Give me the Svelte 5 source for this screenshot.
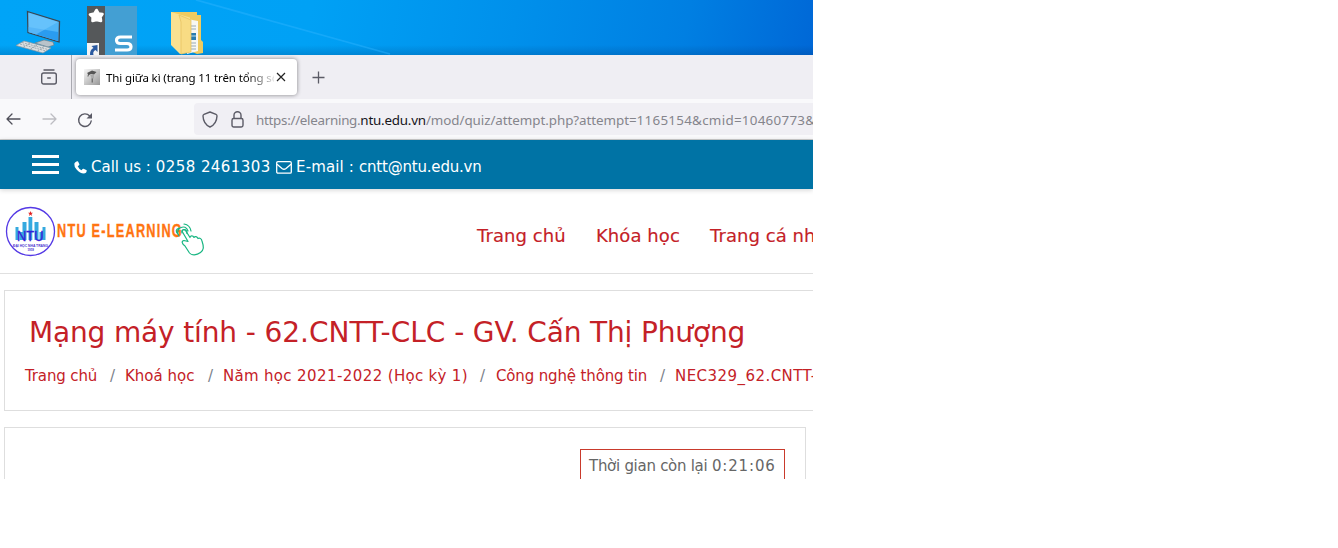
<script>
  const nav = ['Trang chủ', 'Khóa học', 'Trang cá nhân'];
  const crumbs = [
    { text: 'Trang chủ', gap: 28 },
    { text: 'Khoá học', gap: 28 },
    { text: 'Năm học ', digits: '2021-2022', tail: ' (Học kỳ 1)', gap: 29 },
    { text: 'Công nghệ thông tin', gap: 28 },
    { text: '', digits: 'NEC329_62.CNTT-CLC' },
  ];
</script>

<div class="screen">
  <div class="desktop">
    <svg class="beam" width="813" height="55" viewBox="0 0 813 55">
      <path d="M196 0 390 54" stroke="#2fb4ff" stroke-width="1.800" opacity=".45" />
    </svg>
    <svg class="pc" width="46" height="44" viewBox="0 0 46 44">
      <path d="M11.5 1.5 43.5 11.5 43 32 12 22.500Z" fill="#4fb6f8" stroke="#3a4651" stroke-width="1.300" />
      <path d="M12.500 17 42 22V31L12.500 22Z" fill="#2a9cf0" />
      <path d="M42 12 20 24.500 12.500 22V3Z" fill="#7accff" opacity=".55" />
      <path d="M28 30 37 32 38 35 32 37 19 33Z" fill="#b9c3ca" stroke="#707a82" stroke-width=".6" />
      <path d="M8 31 35 38 27 43 0 35.500Z" fill="#dce0e2" stroke="#8b959c" stroke-width=".7" />
      <path d="M6 32.500 32 39.500M4 34 30 41M14 33 7 37.500M21 35 14 39.500M28 36.500 21 41.500" stroke="#8f9aa2" stroke-width=".8" stroke-dasharray="2 1" fill="none" />
    </svg>
    <svg class="app" width="50" height="49" viewBox="0 0 50 49">
      <rect width="50" height="49" fill="#439fd3" />
      <rect width="18" height="49" fill="#55585a" />
      <path d="m9.500 4 2 3.500 4 .5-2 3 .5 4-4.500-1-4 1 .2-4L3 8.500l4.500-1Z" fill="#fff" stroke="#fff" stroke-width="2.600" stroke-linejoin="round" />
      <path d="M45 31H33.500q-4 0-4 3.300t4 3.200h6.500q4 0 4 3.300T40 44H28" fill="none" stroke="#fff" stroke-width="3.200" />
      <rect y="37" width="12" height="12" fill="#f4f4f4" />
      <path d="M3 49c0-4 1-6 3.500-7L4.500 40l6-1v7L8.500 44C6 45 6 47 6.500 49Z" fill="#2959a0" />
    </svg>
    <svg class="folder" width="34" height="44" viewBox="0 0 34 44">
      <path d="M1 1H27L27 4H31V29L33 31V42L27 43 1 32Z" fill="#efcb60" />
      <path d="m17 8 11 2v30L17 43Z" fill="#f7f7f2" />
      <path d="M21 15h5M21 18h5M21 32h5M21 35h5M21 38h5" stroke="#98a9b5" />
      <path d="M21 22h5v7h-5Z" fill="#287cb0" /><path d="M21 25h5" stroke="#b9dce8" />
      <path d="M1 1 20 6.500V41L10 43 1 34Z" fill="#fae191" />
      <path d="M9 4 21 9V41l-10 2V11Z" fill="#f8dc84" stroke="#e4c05c" stroke-width=".7" />
    </svg>
  </div>

  <div class="tabs">
    <div class="archive">
      <svg width="18" height="18" viewBox="0 0 18 18" fill="none" stroke="#5b5b66" stroke-width="1.400" stroke-linecap="round">
        <path d="M4 2h10M7.700 10h2.600" /><rect x="1.700" y="5" width="14.600" height="11" rx="2" />
      </svg>
    </div>
    <div class="tab">
      <svg class="favicon" width="16" height="16" viewBox="0 0 16 16">
        <defs><linearGradient id="fav" x2="1" y2="1"><stop stop-color="#f7f7f7" /><stop offset="1" stop-color="#979797" /></linearGradient></defs>
        <rect width="16" height="16" fill="url(#fav)" />
        <path d="m3 4 5-2.500 4.500 1.500L10 5.500 7 5 5 6Z" fill="#555" /><path d="M6 5.500 10 6v3l-2 2-1-3Z" fill="#aaa" />
        <path d="M4.500 5 4 7.500M8.200 9.500v4" stroke="#555" />
      </svg>
      <span class="title">Thi giữa kì (trang 11 trên tổng số</span>
      <svg class="close" width="10" height="10" viewBox="0 0 10 10" stroke="#222" stroke-width="1.200"><path d="m1 1 8 8M9 1 1 9" /></svg>
    </div>
    <svg class="plus" width="13" height="13" viewBox="0 0 13 13" stroke="#5b5b66" stroke-width="1.300"><path d="M6.500.5v12M.5 6.500h12" /></svg>
  </div>

  <div class="toolbar">
    <svg class="back" width="15" height="14" viewBox="0 0 15 14" fill="none" stroke="#4f4f59" stroke-width="1.300" stroke-linecap="round" stroke-linejoin="round"><path d="M14 7H1M6 2 1 7l5 5" /></svg>
    <svg class="fwd" width="15" height="14" viewBox="0 0 15 14" fill="none" stroke="#bdbdc2" stroke-width="1.300" stroke-linecap="round" stroke-linejoin="round"><path d="M1 7h13M9 2l5 5-5 5" /></svg>
    <svg class="reload" width="16" height="16" viewBox="0 0 16 16"><path d="M14.200 9a6.300 6.300 0 1 1-1.500-5" fill="none" stroke="#5b5b66" stroke-width="1.400" stroke-linecap="round" /><path d="M15 1v5.500H9.500Z" fill="#5b5b66" /></svg>
    <div class="urlbar">
      <svg class="shield" width="16" height="17" viewBox="0 0 16 17" fill="none" stroke="#5b5b66" stroke-width="1.400" stroke-linejoin="round"><path d="M8 1 14 3.300Q15 3.700 15 5c-.2 5-2.500 9-7 11C3.500 14 1.200 10 1 5q0-1.300 1-1.700Z" /></svg>
      <svg class="lock" width="13" height="17" viewBox="0 0 13 17" fill="none" stroke="#5b5b66" stroke-width="1.400"><rect x="1" y="7.500" width="11" height="8.500" rx="1.700" /><path d="M3 7.500V4.300a3.500 3.500 0 0 1 7 0V7.500" /></svg>
      <span class="url">https://elearning.<b>ntu.edu.vn</b><span class="path">/mod/quiz/attempt.php?attempt=</span><span class="query">1165154&amp;cmid=10460773&amp;</span></span>
    </div>
  </div>

  <div class="contact">
    <div class="burger"><i></i><i></i><i></i></div>
    <svg class="phone" width="13" height="13" viewBox="0 0 13 13" fill="#fff"><path d="M2.500.4 3.400.2Q4 0 4.200.7L5.400 3.300Q5.500 3.800 5 4.200L3.700 5.200Q4.800 7.700 7.500 9.200L8.600 7.900Q9 7.500 9.500 7.700L12.300 9Q12.800 9.300 12.700 9.800 12.500 12.400 9.800 12.500 6 12.300 2.600 8.500 0 5.500.3 2.700.7 1 2.500.4Z" /></svg>
    <span class="call">Call us : <span class="num">0258 2461303</span></span>
    <svg class="mail" width="16" height="13" viewBox="0 0 16 13" fill="none" stroke="#fff" stroke-width="1.300"><rect x=".7" y=".7" width="14.600" height="11.400" rx="1.200" /><path d="M1 3.200 6 7.500Q8 9 10 7.500l5-4.300" /></svg>
    <span class="email">E-mail : <span class="addr">cntt@ntu.edu.vn</span></span>
  </div>

  <div class="header">
    <svg class="logo" width="202" height="54" viewBox="0 0 202 54">
      <circle cx="26.500" cy="26.500" r="24" fill="#fff" stroke="#5439e5" stroke-width="1.300" />
      <path d="m26.500 6 .7 1.700h1.800L27.500 9l.6 1.900-1.600-1.100-1.600 1.100.6-1.900L24 7.700h1.800Z" fill="#e12222" />
      <path d="M11.500 22h3v13h-3ZM15.500 27h3v8h-3ZM18.500 17h4v18h-4ZM24.500 12h3.800v23h-3.800ZM30.500 17h4v18h-4ZM38.500 22h3v13h-3ZM35.500 27h3v8h-3Z" fill="#35a9df" />
      <text x="13" y="36" class="ntu" textLength="26.500" lengthAdjust="spacingAndGlyphs">NTU</text>
      <text x="9" y="41.500" class="uni" textLength="35" lengthAdjust="spacingAndGlyphs">ĐẠI HỌC NHA TRANG</text>
      <text x="23.500" y="45.500" class="year" textLength="6.500" lengthAdjust="spacingAndGlyphs">1959</text>
      <text x="53" y="31.500" class="brand" textLength="126" lengthAdjust="spacingAndGlyphs">NTU E-LEARNING</text>
      <g fill="none" stroke="#18b682" stroke-width="1.200" stroke-linejoin="round" stroke-linecap="round">
        <path d="M181 41c-3-2-4-5-1-5.500l4 1-5.500-9.500c-.8-2 1.800-3.500 3-1.500l4.500 7c0-2 3-2.500 4 0 1-1.500 3-1 4 1 2-1 3.500.5 4 2.500 2 6 2 9-1.500 11.500-4 3-9 3-11 .5Z" fill="#fff" />
        <path d="M175 31q-3-5 1-8 6-3 8 3M178 28q-1-3 2-3.500 3 0 3 4M174 29q-4-4 1-6M180 19q6 1 7 7" />
      </g>
    </svg>
    <nav>{#each nav as item, i}<a href="#top" class="n{i}">{item}</a>{/each}</nav>
  </div>

  <div class="card course">
    <h1>Mạng máy tính - <span class="code">62.CNTT-CLC</span> - GV. Cấn Thị Phượng</h1>
    <div class="crumbs">
      {#each crumbs as crumb, i}
        <a href="#top" class="c{i}">{crumb.text}{#if crumb.digits}<span class="wide">{crumb.digits}</span>{/if}{crumb.tail ?? ''}</a>{#if crumb.gap}<span class="sep" style:width="{crumb.gap}px">/</span>{/if}
      {/each}
    </div>
  </div>

  <div class="card quiz"><div class="timer">Thời gian còn lại <span class="clock">0:21:06</span></div></div>
</div>

<style>
  :global(body) { margin: 0; background: #fff; }
  .screen { width: 813px; height: 479px; overflow: hidden; background: #fff; font-family: "DejaVu Sans", sans-serif; display: flex; flex-direction: column; }
  .screen > div { box-sizing: border-box; flex: none; }
  svg { flex: none; display: block; }
  a { color: #c42127; text-decoration: none; }
  .desktop { position: relative; height: 55px; overflow: hidden; display: flex; align-items: flex-start; background: linear-gradient(to bottom, transparent 45px, rgba(0,40,90,.2)), linear-gradient(100deg, #00a4f7 0, #00a1f5 38%, #0090eb 63%, #007fe2 84%, #0068d7 100%); }
  .beam { position: absolute; inset: 0; }
  .pc { margin: 10px 0 0 16px; }
  .app { margin: 6px 0 0 25px; }
  .folder { margin: 11px 0 0 33px; }
  .tabs { height: 44px; background: #efeef3; display: flex; align-items: center; }
  .archive { width: 72px; height: 44px; box-sizing: border-box; border-right: 1px solid #aaaab1; padding: 13px 0 0 40px; }
  .tab { width: 221px; height: 36px; box-sizing: border-box; margin-left: 4px; background: #fff; border-radius: 4px; box-shadow: 0 0 4px rgba(0,0,0,.45); display: flex; align-items: center; padding-left: 8px; }
  .title { font: 11.500px/20px "Noto Sans", sans-serif; letter-spacing: -.12px; width: 168px; margin: 2px 0 0 6px; overflow: hidden; white-space: nowrap; color: #000; mask-image: linear-gradient(to right, #000 140px, transparent 172px); }
  .close { margin-left: 2px; }
  .plus { margin-left: 15px; }
  .toolbar { height: 41px; background: #f9f9fb; border-bottom: 1px solid #ccc; display: flex; align-items: center; }
  .back { margin-left: 6px; }
  .fwd { margin-left: 21px; }
  .reload { margin: 2px 0 0 20px; }
  .urlbar { margin-left: 101px; height: 32px; width: 640px; flex: none; background: #f0eff4; border-radius: 4px; display: flex; align-items: center; }
  .shield { margin-left: 8px; }
  .lock { margin-left: 13px; }
  .url { margin-left: 12px; font: 13.400px/20px "Noto Sans", sans-serif; color: #85858c; white-space: nowrap; letter-spacing: -.29px; padding-top: 1px; }
  .url b { color: #15141a; font-weight: 400; letter-spacing: -.22px; }
  .path { letter-spacing: -.06px; }
  .query { letter-spacing: .27px; }
  .contact { height: 49px; background: #0073a5; color: #fff; display: flex; align-items: center; font-size: 15px; padding-top: 5px; white-space: nowrap; box-shadow: 0 1px 5px rgba(0,0,0,.18); }
  .burger { width: 27px; height: 19px; margin: -5px 0 0 32px; display: flex; flex-direction: column; justify-content: space-between; }
  .burger i { height: 3px; background: #fff; }
  .phone { margin-left: 15px; }
  .call { width: 181px; margin-left: 4px; }
  .num { letter-spacing: .45px; }
  .mail { margin-left: 4px; }
  .email { margin-left: 4px; letter-spacing: .15px; }
  .addr { letter-spacing: -.2px; }
  .header { height: 85px; border-bottom: 1px solid #e0e0e0; display: flex; align-items: flex-start; }
  .logo { margin: 16px 0 0 4px; }
  .ntu { font: 14.500px "Liberation Sans", sans-serif; fill: #3520d8; stroke: #3520d8; stroke-width: .3px; }
  .uni { font: bold 4px "Liberation Sans", sans-serif; fill: #4933cf; }
  .year { font: bold 3.500px "Liberation Sans", sans-serif; fill: #4933cf; }
  .brand { font: bold 18.500px "Liberation Sans", sans-serif; letter-spacing: 1.800px; fill: #ff7411; stroke: #ff7411; stroke-width: .35px; }
  nav { display: flex; margin: 36px 0 0 271px; font-size: 18px; line-height: 22px; white-space: nowrap; letter-spacing: .07px; -webkit-text-stroke: .15px #c42127; }
  nav a { width: 89px; margin-right: 30px; flex: none; }
  nav .n1 { width: 84px; }
  .card { border: 1px solid #dedede; margin-left: 4px; }
  .course { width: 820px; height: 121px; margin-top: 16px; padding: 24px 0 0 20px; }
  h1 { margin: 0 0 0 4px; font-size: 28px; line-height: 36px; font-weight: 400; color: #c42127; white-space: nowrap; letter-spacing: -.15px; }
  .code { letter-spacing: 0; }
  .crumbs { display: flex; margin-top: 15px; font-size: 15px; line-height: 20px; white-space: nowrap; letter-spacing: -.14px; }
  .crumbs a { flex: none; }
  .crumbs .wide { letter-spacing: .45px; }
  .c0 { width: 72px; } .c1 { width: 70px; letter-spacing: 0; } .c2 { width: 244px; letter-spacing: .3px; } .c3 { width: 151px; }
  .sep { flex: none; box-sizing: border-box; padding-left: 13px; color: #7a828a; }
  .quiz { width: 802px; height: 100px; margin-top: 16px; padding: 21px 20px 0 0; display: flex; justify-content: flex-end; align-items: flex-start; }
  .timer { box-sizing: border-box; width: 205px; height: 60px; border: 1px solid #c93a2c; padding: 6px 0 0 8px; font-size: 15px; line-height: 20px; color: #666; white-space: nowrap; letter-spacing: -.28px; }
  .clock { letter-spacing: .85px; }
</style>
